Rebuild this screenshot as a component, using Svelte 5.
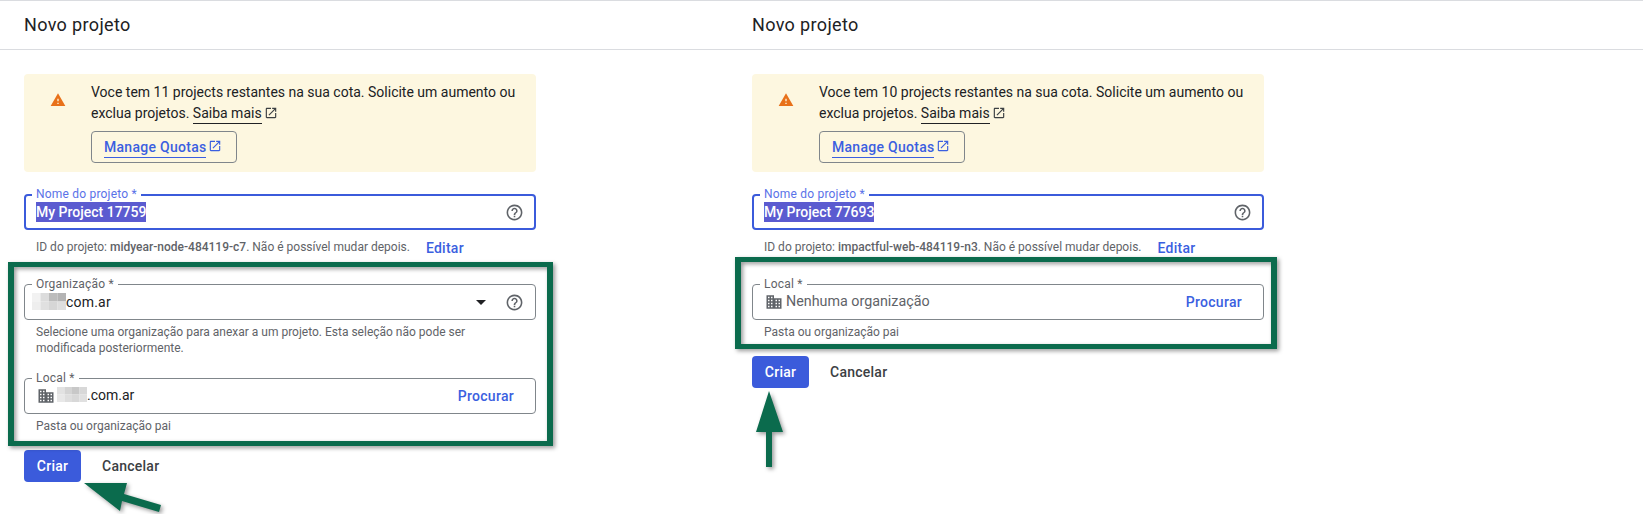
<script>
  const icons = {
    warning: 'M1 21h22L12 2 1 21zm12-3h-2v-2h2v2zm0-4h-2v-4h2v4z',
    external: 'M19 19H5V5h7V3H5c-1.11 0-2 .9-2 2v14c0 1.1.89 2 2 2h14c1.1 0 2-.9 2-2v-7h-2v7zM14 3v2h3.59l-9.83 9.83 1.41 1.41L19 6.41V10h2V3h-7z',
    help: 'M11 18h2v-2h-2v2zm1-16C6.48 2 2 6.48 2 12s4.48 10 10 10 10-4.48 10-10S17.52 2 12 2zm0 18c-4.41 0-8-3.59-8-8s3.59-8 8-8 8 3.59 8 8-3.59 8-8 8zm0-14c-2.21 0-4 1.79-4 4h2c0-1.1.9-2 2-2s2 .9 2 2c0 2-3 1.75-3 5h2c0-2.25 3-2.5 3-5 0-2.21-1.79-4-4-4z',
    // solid building, windows cut out
    domain: 'M2 3h10v4h10v14H2zM4 5v2h2V5zM8 5v2h2V5zM4 9v2h2V9zM8 9v2h2V9zM14 9v2h2V9zM18 9v2h2V9zM4 13v2h2v-2zM8 13v2h2v-2zM14 13v2h2v-2zM18 13v2h2v-2zM4 17v2h2v-2zM8 17v2h2v-2zM14 17v2h2v-2zM18 17v2h2v-2z',
    caret: 'M7 10l5 5 5-5z'
  };

  // Pixelated blur blocks hiding the domain name: [x, y, grey]
  const orgBlur = [
    [0, 0, '#f2f2f2'], [8, 0, '#dcdcdc'], [16, 0, '#bcbcbc'], [24, 0, '#b4b4b4'],
    [0, 8, '#eeeeee'], [8, 8, '#e0e0e0'], [16, 8, '#d6d6d6'], [24, 8, '#dedede']
  ];
  const localBlur = [
    [0, 0, '#e2e2e2'], [8, 0, '#d4d4d4'], [16, 0, '#c8c8c8'], [24, 0, '#d8d8d8'],
    [0, 8, '#e8e8e8'], [8, 8, '#dedede'], [16, 8, '#d8d8d8'], [24, 8, '#e0e0e0']
  ];

  const panels = [
    {
      quota: 11,
      name: 'My Project 17759',
      id: 'midyear-node-484119-c7',
      hasOrg: true
    },
    {
      quota: 10,
      name: 'My Project 77693',
      id: 'impactful-web-484119-n3',
      hasOrg: false
    }
  ];
</script>

{#snippet icon(name, cls)}
  <svg class="icon {cls}" viewBox="0 0 24 24" aria-hidden="true"><path fill-rule="evenodd" d={icons[name]} /></svg>
{/snippet}

{#snippet blur(blocks)}
  <svg class="blur" viewBox="0 0 32 16" aria-hidden="true">
    {#each blocks as [x, y, fill]}
      <rect {x} {y} width="8" height="8" {fill} />
    {/each}
  </svg>
{/snippet}

{#snippet localField(panel)}
  <div class="field">
    <span class="field-label">Local *</span>
    {@render icon('domain', 'ic-domain')}
    {#if panel.hasOrg}
      <span class="field-value local-value">{@render blur(localBlur)}.com.ar</span>
    {:else}
      <span class="field-value muted-value">Nenhuma organização</span>
    {/if}
    <span class="browse">Procurar</span>
  </div>
  <div class="hint">Pasta ou organização pai</div>
{/snippet}

<div class="page">
  {#each panels as panel}
    <section class="panel">
      <header class="panel-header">Novo projeto</header>

      <div class="form">
        <div class="banner">
          {@render icon('warning', 'ic-warning')}
          <div class="banner-body">
            <p>
              Voce tem {panel.quota} projects restantes na sua cota. Solicite um aumento ou
              exclua projetos. <span class="learn">Saiba mais</span>{@render icon('external', 'ic-ext')}
            </p>
            <div class="quota-btn">
              <span class="quota-link">Manage Quotas</span>{@render icon('external', 'ic-ext ic-ext-blue')}
            </div>
          </div>
        </div>

        <div class="field field-focus">
          <span class="field-label">Nome do projeto *</span>
          <span class="selected">{panel.name}</span>
          {@render icon('help', 'ic-help')}
        </div>
        <div class="id-row">
          <span class="id-text">ID do projeto: <b>{panel.id}</b>. Não é possível mudar depois.</span>
          <span class="edit">Editar</span>
        </div>

        {#if panel.hasOrg}
          <div class="field">
            <span class="field-label">Organização *</span>
            <span class="field-value org-value">{@render blur(orgBlur)}com.ar</span>
            {@render icon('caret', 'ic-caret')}
            {@render icon('help', 'ic-help')}
          </div>
          <div class="hint hint-org">
            Selecione uma organização para anexar a um projeto. Esta seleção não pode ser
            modificada posteriormente.
          </div>
        {/if}

        {@render localField(panel)}

        <div class="actions">
          <span class="btn-primary">Criar</span>
          <span class="btn-text">Cancelar</span>
        </div>
      </div>
    </section>
  {/each}

  <!-- Annotations drawn over the screenshot -->
  <div class="mark mark-left"></div>
  <div class="mark mark-right"></div>
  <svg class="arrows" viewBox="0 0 1643 514" aria-hidden="true">
    <polygon points="84,483 127,483 124,494 161,505 159,512 122,501 120,511" />
    <polygon points="769,391 783,432 772,432 772,467 766,467 766,432 756,432" />
  </svg>
</div>

<style>
  :global(body) {
    background: #fff;
  }

  .page {
    position: relative;
    display: grid;
    grid-template-columns: 728px 915px;
    width: 1643px;
    height: 514px;
    overflow: hidden;
    border-top: 1px solid #dadce0;
    box-sizing: border-box;
    font-family: Roboto, "Liberation Sans", sans-serif;
    font-size: 14px;
    color: #202124;
  }

  .panel-header {
    height: 48px;
    padding-left: 24px;
    border-bottom: 1px solid #dadce0;
    font-size: 18px;
    line-height: 48px;
    letter-spacing: 0.35px;
  }

  .form {
    width: 512px;
    margin-left: 24px;
    padding-top: 24px;
  }

  .banner {
    display: flex;
    height: 98px;
    box-sizing: border-box;
    padding: 8px 20px 0 26px;
    margin-bottom: 22px;
    background: #fdf7e0;
    border-radius: 4px;
  }

  .banner p {
    margin: 0;
    line-height: 21px;
  }

  .banner-body {
    flex: 1;
    margin-left: 25px;
  }

  .learn {
    border-bottom: 1px solid #202124;
    padding-bottom: 2px;
  }

  .quota-btn {
    display: flex;
    align-items: center;
    width: 146px;
    height: 32px;
    box-sizing: border-box;
    margin-top: 7px;
    padding-left: 12px;
    border: 1px solid #80868b;
    border-radius: 4px;
    color: #3b5fe0;
    font-weight: 500;
    letter-spacing: 0.28px;
  }

  .quota-link {
    border-bottom: 1px solid #3b5fe0;
    line-height: 19px;
    margin-top: 1px;
  }

  .icon {
    flex: none;
    fill: currentColor;
  }

  .ic-warning {
    width: 16px;
    height: 16px;
    margin-top: 10px;
    color: #e8711a;
  }

  .ic-ext {
    width: 14px;
    height: 14px;
    margin-left: 2px;
    vertical-align: -2px;
    color: #3c4043;
  }

  .ic-ext-blue {
    color: #3b5fe0;
    margin-top: -2px;
  }

  .ic-help {
    width: 19px;
    height: 19px;
    color: #5f6368;
  }

  .ic-caret {
    width: 24px;
    height: 24px;
    margin-right: 12px;
    color: #202124;
  }

  .ic-domain {
    width: 18px;
    height: 18px;
    margin-right: 4px;
    color: #5f6368;
  }

  .field {
    position: relative;
    display: flex;
    align-items: center;
    height: 36px;
    box-sizing: border-box;
    padding: 0 11px 0 12px;
    border: 1px solid #80868b;
    border-radius: 4px;
  }

  .field-focus {
    border: 2px solid #3b5bdb;
    padding: 0 10px 0 10px;
    justify-content: space-between;
  }

  .field-label {
    position: absolute;
    left: 7px;
    top: -8px;
    padding: 0 4px;
    background: #fff;
    font-size: 12px;
    line-height: 14px;
    letter-spacing: 0.2px;
    color: #5f6368;
  }

  .field-focus .field-label {
    left: 6px;
    top: -9px;
    color: #5a72e8;
  }

  .selected {
    display: block;
    background: #5b5bd0;
    color: #fff;
    font-weight: 500;
    line-height: 20px;
  }

  .field-value {
    display: flex;
    align-items: center;
    flex: 1;
    letter-spacing: 0.2px;
  }

  .org-value {
    margin-top: -1px;
    margin-left: -5px;
  }

  .local-value {
    margin-top: -3px;
    margin-left: -2px;
    letter-spacing: 0;
  }

  .local-value .blur {
    width: 30px;
    height: 15px;
  }

  .muted-value {
    color: #5f6368;
    font-size: 14.3px;
    letter-spacing: 0;
    margin-top: -2px;
    margin-left: -1px;
  }

  .blur {
    width: 34px;
    height: 17px;
    filter: blur(0.7px);
  }

  .browse {
    margin-right: 10px;
    color: #3b5fe0;
    font-weight: 500;
    letter-spacing: 0.3px;
  }

  .id-row {
    display: flex;
    align-items: center;
    height: 16px;
    margin: 9px 0 29px 12px;
    font-size: 12px;
    color: #5f6368;
  }

  .id-text b {
    font-weight: 500;
    color: #5f6368;
  }

  .edit {
    margin: 2px 0 0 16px;
    font-size: 14px;
    font-weight: 500;
    letter-spacing: 0.25px;
    color: #3b5fe0;
  }

  .hint {
    padding: 4px 12px 0;
    font-size: 12px;
    line-height: 16px;
    color: #5f6368;
  }

  .hint-org {
    padding-bottom: 22px;
  }

  .actions {
    display: flex;
    align-items: center;
    gap: 21px;
    margin-top: 16px;
    font-weight: 500;
    letter-spacing: 0.25px;
  }

  .btn-primary {
    width: 57px;
    height: 32px;
    border-radius: 4px;
    background: #3b5bdb;
    color: #fff;
    text-align: center;
    line-height: 32px;
  }

  .btn-text {
    color: #3c4043;
  }

  .mark {
    position: absolute;
    box-sizing: border-box;
    border: solid #0b6b4d;
    border-width: 5px 6px;
    filter: drop-shadow(2px 2px 2px rgba(0, 0, 0, 0.4));
  }

  .mark-left {
    left: 8px;
    top: 261px;
    width: 545px;
    height: 184px;
  }

  .mark-right {
    left: 735px;
    top: 256px;
    width: 542px;
    height: 92px;
  }

  .arrows {
    position: absolute;
    left: 0;
    top: -1px;
    width: 1643px;
    height: 514px;
    fill: #0b6b4d;
    filter: drop-shadow(2px 2px 2px rgba(0, 0, 0, 0.4));
    pointer-events: none;
  }
</style>
